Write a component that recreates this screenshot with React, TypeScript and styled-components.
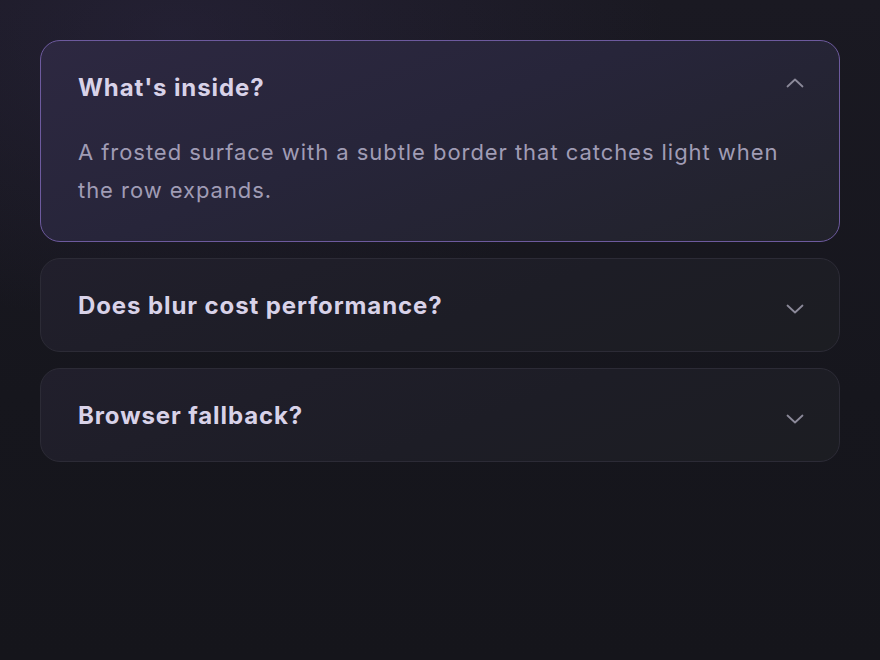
import React, { useState } from 'react'
import styled, { createGlobalStyle } from 'styled-components'

const GlobalStyle = createGlobalStyle`
  html, body {
    margin: 0;
    padding: 0;
    background: #16161d;
  }
  body {
    font-family: Inter, "Noto Sans", "Liberation Sans", sans-serif;
  }
`

const Page = styled.div`
  min-height: 660px;
  box-sizing: border-box;
  padding: 40px 40px;
  background:
    radial-gradient(ellipse 700px 420px at 20% 5%, rgba(60, 50, 95, 0.28), transparent 70%),
    linear-gradient(180deg, #1a1922 0%, #16161d 60%, #15151b 100%);
  display: flex;
  flex-direction: column;
  gap: 16px;
`

const Item = styled.div<{ $open: boolean }>`
  border-radius: 20px;
  border: 1.5px solid ${(p) => (p.$open ? '#6d5a9e' : '#2c2b36')};
  background: ${(p) =>
    p.$open
      ? 'linear-gradient(160deg, #2d2841 0%, #27253a 45%, #21222a 100%)'
      : 'linear-gradient(160deg, #211f2c 0%, #1d1d26 55%, #1c1d22 100%)'};
  overflow: hidden;
`

const Header = styled.button`
  all: unset;
  box-sizing: border-box;
  width: 100%;
  display: flex;
  align-items: center;
  justify-content: space-between;
  padding: 33px 35px 31px 37px;
  cursor: pointer;
`

const Title = styled.span`
  font-size: 24px;
  line-height: 28px;
  font-weight: 650;
  color: #d8d2e8;
  letter-spacing: 0.9px;
`

const Chevron = styled.svg<{ $open: boolean }>`
  width: 18px;
  height: 10px;
  transform: translateY(${(p) => (p.$open ? '-5px' : '3px')});
`

const Body = styled.p`
  margin: 0;
  padding: 0 40px 32px 37px;
  font-size: 22px;
  line-height: 38px;
  letter-spacing: 0.95px;
  color: #a09cb5;
`

const items = [
  {
    q: "What's inside?",
    a: 'A frosted surface with a subtle border that catches light when the row expands.',
  },
  { q: 'Does blur cost performance?', a: 'Backdrop blur is composited on the GPU; keep the layer count low.' },
  { q: 'Browser fallback?', a: 'Without backdrop-filter support, a solid tinted surface is used.' },
]

const App = (): JSX.Element => {
  const [open, setOpen] = useState(0)
  return (
    <Page>
      <GlobalStyle />
      {items.map((it, i) => (
        <Item key={it.q} $open={open === i}>
          <Header onClick={() => setOpen(open === i ? -1 : i)}>
            <Title>{it.q}</Title>
            <Chevron $open={open === i} viewBox="0 0 18 10" fill="none">
              <path
                d={open === i ? 'M1.5 8.5 9 1.5l7.5 7' : 'M1.5 1.5 9 8.5l7.5-7'}
                stroke="#8b8999"
                strokeWidth="1.8"
                strokeLinecap="round"
                strokeLinejoin="round"
              />
            </Chevron>
          </Header>
          {open === i && <Body>{it.a}</Body>}
        </Item>
      ))}
    </Page>
  )
}

export default App
